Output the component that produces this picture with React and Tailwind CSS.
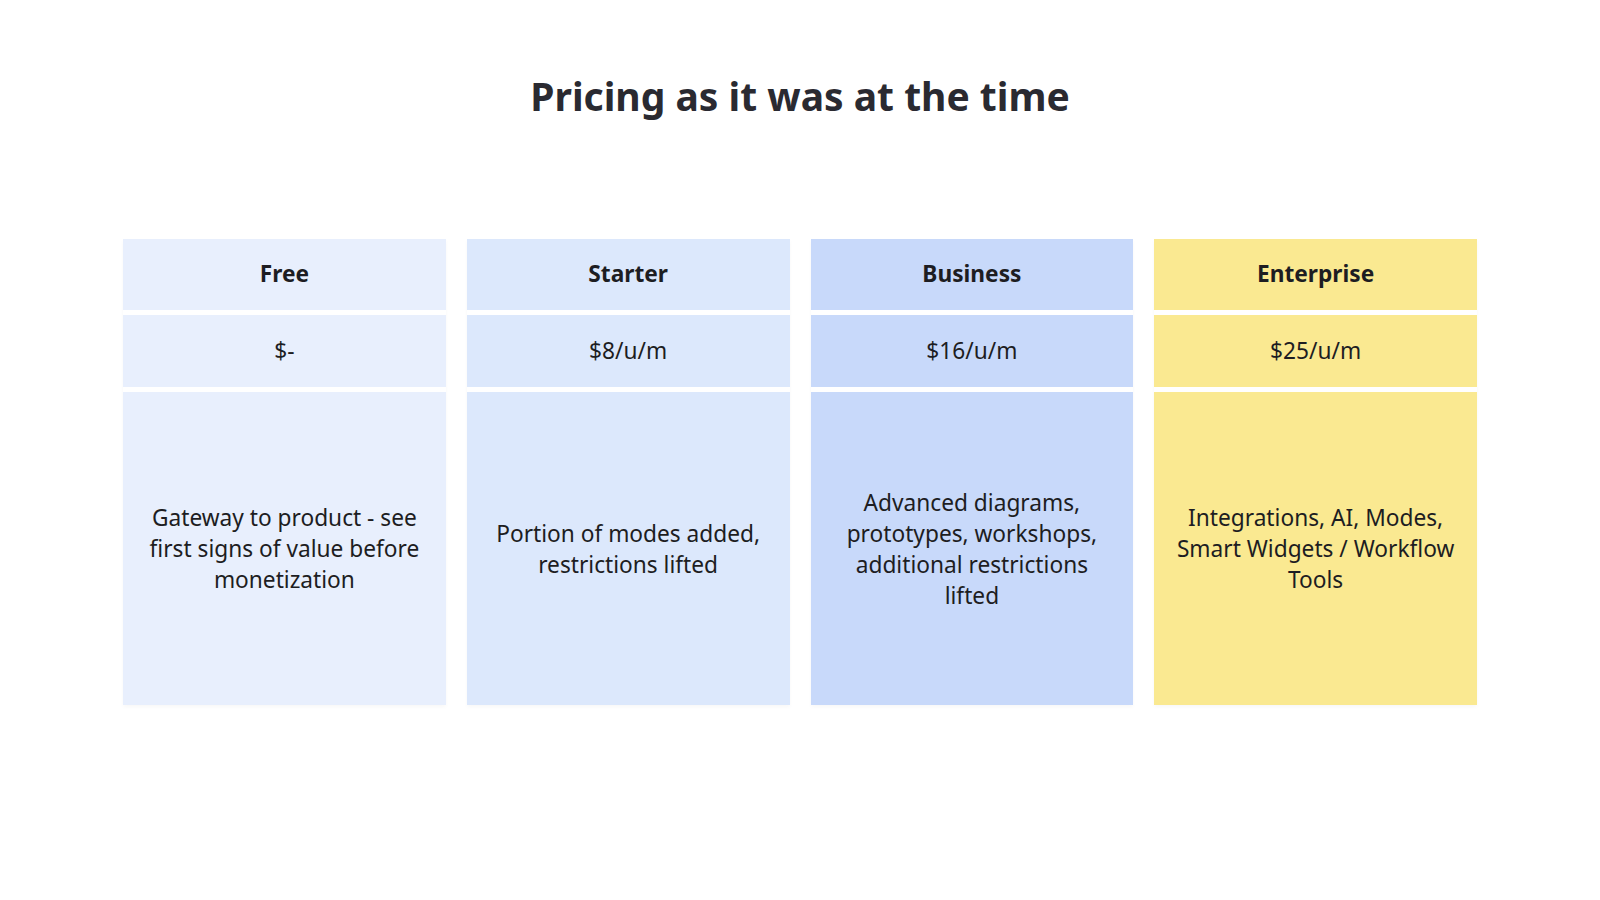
const plans = [
  { name: "Free", price: "$-", desc: "Gateway to product - see first signs of value before monetization", bg: "bg-[#e8effd]" },
  { name: "Starter", price: "$8/u/m", desc: "Portion of modes added, restrictions lifted", bg: "bg-[#dce8fc]" },
  { name: "Business", price: "$16/u/m", desc: "Advanced diagrams, prototypes, workshops, additional restrictions lifted", bg: "bg-[#c8d9fa]" },
  { name: "Enterprise", price: "$25/u/m", desc: "Integrations, AI, Modes, Smart Widgets / Workflow Tools", bg: "bg-[#fae991]" },
];

export default function App() {
  return (
    <div className="w-[1600px] h-[900px] bg-white flex flex-col items-center text-[#1d1d22]" style={{ fontFamily: '"Noto Sans", "Open Sans", sans-serif' }}>
      <h1 className="mt-[71px] h-[50px] leading-[50px] text-[39px] font-bold text-[#2a2a31]">Pricing as it was at the time</h1>
      <div className="mt-[118px] w-[1354px] grid grid-cols-4 gap-x-[21px]">
        {plans.map((p) => (
          <div key={p.name} className="flex flex-col gap-[5px] shadow-[0_2px_4px_rgba(0,0,0,0.03)]">
            <div className={`${p.bg} h-[71px] flex items-center justify-center text-[22.7px] font-bold`}>{p.name}</div>
            <div className={`${p.bg} h-[72px] flex items-center justify-center text-[22.7px]`}>{p.price}</div>
            <div className={`${p.bg} h-[313px] flex items-center justify-center px-[19px] text-center text-[22.7px] leading-[31px]`}>{p.desc}</div>
          </div>
        ))}
      </div>
    </div>
  );
}
